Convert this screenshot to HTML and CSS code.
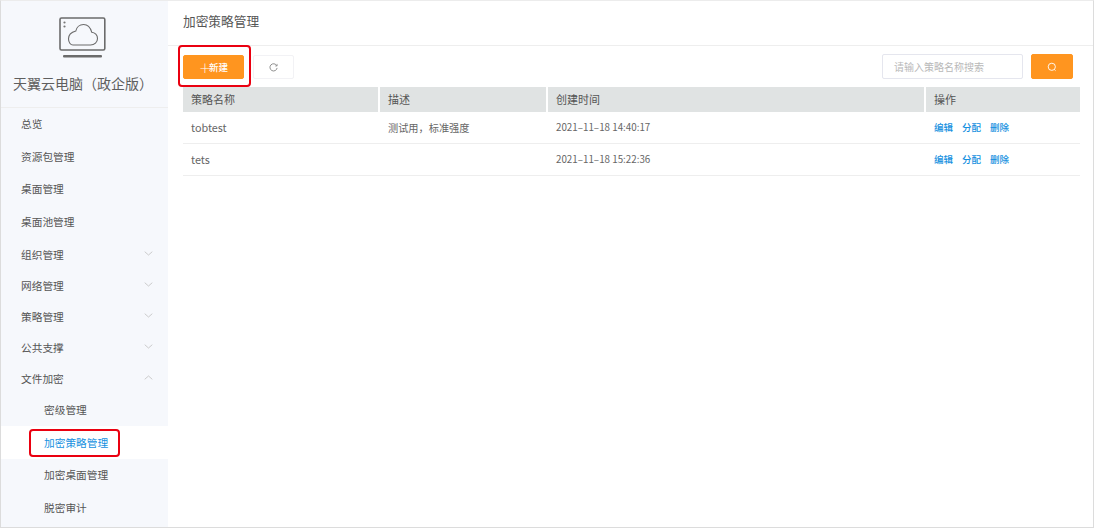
FILE: index.html
```html
<!DOCTYPE html>
<html lang="zh-CN">
<head>
<meta charset="utf-8">
<title>加密策略管理</title>
<link rel="stylesheet" href="styles.css">
</head>
<body>
<div class="app">
  <aside class="sidebar">
    <div class="brand">
      <svg class="logo" width="48" height="41" viewBox="0 0 48 41" fill="none">
        <rect x="1" y="1" width="44.800" height="32" rx="1.500" stroke="#6b6b6b" stroke-width="1.600"/>
        <circle cx="5.500" cy="5.500" r="1.100" fill="#777"/>
        <circle cx="5.500" cy="9.500" r="1.100" fill="#777"/>
        <path d="M14 28h17.500c4 0 7-2.800 7-6.500 0-3.300-2.500-6-5.800-6.300C31.500 10.800 28.500 7.500 24.500 7.500c-3.900 0-7 2.800-7.700 6.500C13 15 9.500 17.800 9.500 21.800c0 3.500 2 6.200 4.500 6.200z" stroke="#6b6b6b" stroke-width="1.100"/>
        <rect x="4" y="38" width="39" height="2.600" rx="1" fill="#6b6b6b"/>
      </svg>
      <div class="brand-name">天翼云电脑（政企版）</div>
    </div>
    <nav class="menu">
      <a class="item tall">总览</a>
      <a class="item tall">资源包管理</a>
      <a class="item tall">桌面管理</a>
      <a class="item tall">桌面池管理</a>
      <a class="item">组织管理<svg class="chev" width="9" height="5" viewBox="0 0 9 5"><path d="M.7.700 4.500 4l3.800-3.300"/></svg></a>
      <a class="item">网络管理<svg class="chev" width="9" height="5" viewBox="0 0 9 5"><path d="M.7.700 4.500 4l3.800-3.300"/></svg></a>
      <a class="item">策略管理<svg class="chev" width="9" height="5" viewBox="0 0 9 5"><path d="M.7.700 4.500 4l3.800-3.300"/></svg></a>
      <a class="item">公共支撑<svg class="chev" width="9" height="5" viewBox="0 0 9 5"><path d="M.7.700 4.500 4l3.800-3.300"/></svg></a>
      <a class="item">文件加密<svg class="chev" width="9" height="5" viewBox="0 0 9 5"><path d="M.7 4.300 4.500 1l3.800 3.300"/></svg></a>
      <a class="item sub first">密级管理</a>
      <a class="item sub active">加密策略管理<span class="mark-menu"></span></a>
      <a class="item sub">加密桌面管理</a>
      <a class="item sub">脱密审计</a>
    </nav>
  </aside>
  <main class="content">
    <header class="page-head">加密策略管理</header>
    <div class="body">
      <div class="toolbar">
        <button class="btn primary add"><span class="plus">＋</span>新建<span class="mark-add"></span></button>
        <button class="btn refresh">
          <svg width="9" height="9" viewBox="0 0 10 10" fill="none"><path d="M8.600 3A4 4 0 1 0 9 5.500" stroke="#777" stroke-width=".9"/><path d="M9 1v2.300H6.800" stroke="#777" stroke-width=".7"/></svg>
        </button>
        <div class="spacer"></div>
        <div class="search-input">请输入策略名称搜索</div>
        <button class="btn primary search">
          <svg width="10" height="10" viewBox="0 0 10 10" fill="none"><circle cx="4.800" cy="4.800" r="3.600" stroke="#fff" stroke-width=".9"/><path d="m7.300 7.500 1.300 1.200" stroke="#fff" stroke-width=".9"/></svg>
        </button>
      </div>
      <table class="grid">
        <colgroup><col class="c1"><col class="c2"><col class="c3"><col class="c4"></colgroup>
        <thead>
          <tr><th>策略名称</th><th>描述</th><th>创建时间</th><th>操作</th></tr>
        </thead>
        <tbody>
          <tr>
            <td class="name">tobtest</td><td>测试用，标准强度</td><td class="date">2021–11–18 14:40:17</td>
            <td class="ops"><a>编辑</a><a>分配</a><a>删除</a></td>
          </tr>
          <tr>
            <td class="name">tets</td><td></td><td class="date">2021–11–18 15:22:36</td>
            <td class="ops"><a>编辑</a><a>分配</a><a>删除</a></td>
          </tr>
        </tbody>
      </table>
    </div>
  </main>
</div>
</body>
</html>
```
FILE: styles.css
```css
* { box-sizing: border-box; }
html, body { margin: 0; height: 100%; }
body {
  background: #fff;
  font-family: "Noto Sans CJK SC", "Liberation Sans", sans-serif;
  color: #555;
  overflow: hidden;
}
.app {
  display: flex;
  width: 1094px;
  height: 528px;
  border: 1px solid #dcdcdc;
  border-top-color: #ececec;
}
.sidebar {
  width: 167px;
  flex: none;
  background: #f6f8fc;
}
.brand {
  height: 107px;
  border-bottom: 1px solid #eeeeee;
  display: flex;
  flex-direction: column;
  align-items: center;
  padding-top: 16px;
}
.logo { display: block; margin-left: -4px; }
.brand-name {
  margin-top: 15px;
  font-size: 14px;
  line-height: 20px;
  color: #5f5f5f;
  white-space: nowrap;
  margin-left: -3px;
}
.menu { display: flex; flex-direction: column; margin-top: -1px; }
.item {
  height: 31px;
  padding-left: 20px;
  padding-right: 15px;
  display: flex;
  align-items: center;
  justify-content: space-between;
  font-size: 10.700px;
  color: #555;
  position: relative;
}
.item.tall { height: 32.800px; }
.item.tall:nth-child(4) { margin-bottom: 1px; }
.item.sub { height: 32.500px; padding-left: 43px; }
.item.sub.first { margin-top: -1px; }
.item.sub.active { height: 33px; background: #fff; color: #1490e0; }
.chev { fill: none; stroke: #c6c6c6; stroke-width: .9; margin-top: -3px; }
.mark-menu {
  position: absolute;
  left: 28px;
  top: 3px;
  width: 91px;
  height: 28px;
  border: 2px solid #ea0010;
  border-radius: 4px;
}
.content { flex: 1; min-width: 0; }
.page-head {
  height: 45px;
  padding: 10px 0 0 15px;
  font-size: 12.700px;
  line-height: 20px;
  color: #555;
  border-bottom: 1px solid #eeeeee;
}
.body { padding: 8px 13px 0 15px; }
.toolbar {
  display: flex;
  align-items: center;
  height: 25px;
  padding-right: 7px;
  margin-bottom: 8px;
}
.btn {
  height: 24px;
  padding: 0;
  font: inherit;
  display: flex;
  align-items: center;
  justify-content: center;
  border-radius: 2px;
  background: #fff;
  border: 1px solid #f2f2f5;
  position: relative;
}
.primary { background: #ff951f; border-color: #ff951f; color: #fff; }
.add { width: 61px; font-size: 9.500px; font-weight: 500; margin-top: 1px; }
.plus { font-weight: 300; font-size: 12px; margin-right: -2px; }
.mark-add {
  position: absolute;
  left: -6px;
  top: -11px;
  width: 73px;
  height: 42px;
  border: 2px solid #ea0010;
  border-radius: 4px;
}
.refresh { width: 41px; margin-left: 9px; margin-top: 1px; }
.spacer { flex: 1; }
.search-input {
  width: 141px;
  height: 25px;
  border: 1px solid #e5e6ee;
  border-radius: 2px;
  padding-left: 11px;
  font-size: 10px;
  line-height: 23px;
  color: #b9b9b9;
}
.search { width: 42px; height: 25px; margin-left: 8px; }
.grid {
  width: 897px;
  border-collapse: separate;
  border-spacing: 0;
  table-layout: fixed;
}
.c1 { width: 195px; }
.c2 { width: 168px; }
.c3 { width: 378px; }
.c4 { width: 156px; }
.grid th {
  height: 25px;
  padding: 0 8px 2px;
  background: #e0e3e3;
  border-left: 2px solid #fff;
  text-align: left;
  font-size: 11px;
  font-weight: 400;
  color: #555;
}
.grid th:first-child { border-left: 0; }
.grid td {
  height: 32px;
  padding: 0 8px 1px 10px;
  font-size: 10.200px;
  color: #666;
  border-bottom: 1px solid #eeeeee;
}
.grid td.name { padding-left: 8px; font-size: 10.800px; }
.grid td.date { font-size: 9.800px; }
.grid td.ops { padding-bottom: 3px; }
.ops a {
  color: #1490e0;
  font-size: 9.500px;
  font-weight: 500;
  margin-right: 9px;
}
```
